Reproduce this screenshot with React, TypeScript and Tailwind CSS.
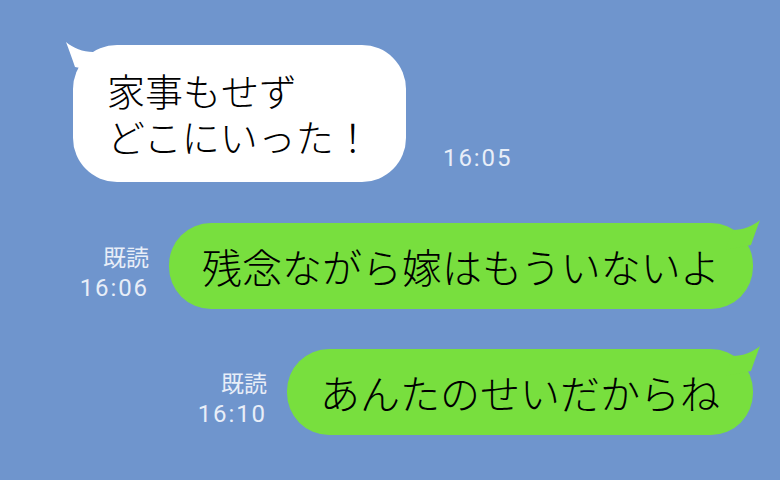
const jp = '"Noto Sans CJK JP", "Noto Sans", sans-serif';

function TailLeft() {
  return (
    <svg className="absolute -left-[10px] -top-[5px]" width="50" height="50" viewBox="0 0 50 50">
      <path d="M3 2 C6 10 9 18 12 27 L38 32 L30 12 C20 12 10 8 3 2 Z" fill="#ffffff" />
    </svg>
  );
}

function TailRight() {
  return (
    <svg className="absolute -right-[10px] -top-[5px]" width="50" height="50" viewBox="0 0 50 50">
      <path d="M47 2 C44 10 41 18 38 27 L12 32 L20 12 C30 12 40 8 47 2 Z" fill="#78df3e" />
    </svg>
  );
}

function ReadStamp({ time }: { time: string }) {
  return (
    <div className="flex flex-col items-end text-[#e8eef8] mt-[12px]">
      <span className="text-[23px] leading-[32px]" style={{ fontFamily: jp }}>既読</span>
      <span className="font-['Roboto'] text-[24px] leading-[32px] tracking-[0.08em]">{time}</span>
    </div>
  );
}

function SentBubble({ text, time, width }: { text: string; time: string; width: string }) {
  return (
    <div className="flex items-center justify-end gap-[20px] pr-[27px]">
      <ReadStamp time={time} />
      <div
        className={`relative h-[86px] ${width} rounded-[42px] bg-[#78df3e] flex items-center pl-[33px] text-[40px] leading-none font-light text-black`}
        style={{ fontFamily: jp }}
      >
        <TailRight />
        <span className="relative">{text}</span>
      </div>
    </div>
  );
}

export default function App() {
  return (
    <div className="w-[780px] h-[480px] overflow-hidden bg-[#6f95cd] pt-[45px] flex flex-col">
      <div className="flex items-end pl-[73px] gap-[37px]">
        <div
          className="relative w-[333px] h-[137px] rounded-[44px] bg-white pl-[34px] pt-[22px] text-[38px] leading-[46px] font-light text-black"
          style={{ fontFamily: jp }}
        >
          <TailLeft />
          <p className="relative">
            家事もせず
            <br />
            どこにいった！
          </p>
        </div>
        <span className="font-['Roboto'] text-[24px] leading-[32px] tracking-[0.08em] text-[#e8eef8] mb-[8px]">16:05</span>
      </div>
      <div className="mt-[41px]">
        <SentBubble text="残念ながら嫁はもういないよ" time="16:06" width="w-[584px]" />
      </div>
      <div className="mt-[40px]">
        <SentBubble text="あんたのせいだからね" time="16:10" width="w-[466px]" />
      </div>
    </div>
  );
}
